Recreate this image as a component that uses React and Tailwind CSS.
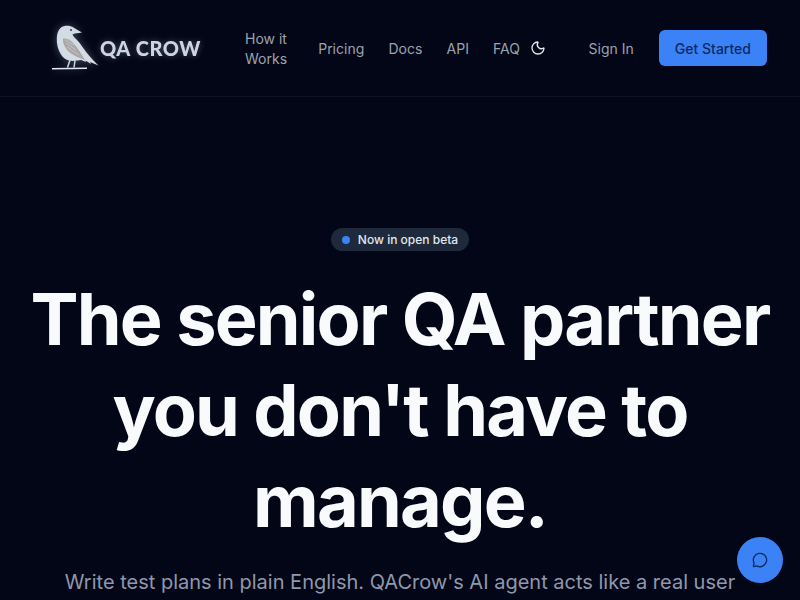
import { Moon, MessageCircle } from "lucide-react"

const navLinks = ["How it Works", "Pricing", "Docs", "API", "FAQ"]

// viewBox keeps the page coordinates of the logo, easier to line up with the picture
function CrowLogo() {
  return (
    <svg
      width="48"
      height="46"
      viewBox="52 24 48 46"
      className="shrink-0 drop-shadow-[0_0_4px_rgba(186,210,240,0.35)]"
    >
      <path
        d="M82 32.5 C79 30.5 76 29.5 73.5 27.5 C70 25 64 25 61 27.5 C58 30 57 34 56.8 38 C56.5 44 58 50 61 54.5 C63 57.5 66 60 69 60.5 C73 61.5 78 60.5 81 60 L86 62 L85.5 60.5 L91 64 L90 62 L98.5 65.5 L93 60 C88 55 84 49 80 43.5 C77 39.5 73.5 37 72.5 34.5 C74 33 78 33.5 82 32.5 Z"
        fill="#d3dbe4"
      />
      <path
        d="M63 38.5 C68 38 72 41 75 45 C79 50 82 55 85 60 C79 58 72 55 68 51 C64.5 47 62.5 42 63 38.5 Z"
        fill="#a9a8a6"
      />
      <path
        d="M66 43 L76 50 M67 47 L79 55 M65 40 L74 45"
        stroke="#c9ccd0"
        strokeWidth="0.8"
        fill="none"
      />
      <path d="M70 60 L67.5 67.5 M75 60.5 L74 67.5" stroke="#cbd5e1" strokeWidth="1.5" fill="none" />
      <path d="M52 68.8 L87 68.2" stroke="#e2e8f0" strokeWidth="1.4" fill="none" />
      <circle cx="71" cy="30" r="0.9" fill="#1e293b" />
    </svg>
  )
}

export default function App() {
  return (
    <div className="h-[600px] overflow-hidden bg-[#030616] font-['Inter',sans-serif] text-white relative">
      <nav className="h-[97px] border-b border-[#0e1222] flex items-center pl-[52px] pr-[33px]">
        <div className="flex items-center w-[148px] shrink-0 mt-[-2px]">
          <CrowLogo />
          <span className="font-['Lato',sans-serif] font-black text-[20px] tracking-[0.03em] text-[#cdd6e0] whitespace-nowrap mt-[2px] drop-shadow-[0_0_3px_rgba(186,210,240,0.35)]">
            QA CROW
          </span>
        </div>

        <div className="flex items-center gap-[24.2px] ml-[45px] mt-0.5 text-sm text-[#9ca3af]">
          {navLinks.map((l) => (
            <a key={l} className={l === "How it Works" ? "w-[49px] leading-5" : "leading-5"}>
              {l}
            </a>
          ))}
        </div>
        <Moon className="ml-[10px] text-[#e5e7eb]" size={16} />

        <div className="ml-auto flex items-center gap-[25px]">
          <a className="text-sm text-[#9ca3af] mt-0.5">Sign In</a>
          <button className="h-9 px-4 pt-px rounded-md bg-[#3b82f6] text-[#0c2a66] text-sm font-medium">
            Get Started
          </button>
        </div>
      </nav>

      <section className="flex flex-col items-center text-center pt-[131px]">
        <div className="flex items-center gap-2 h-[23px] px-[11px] rounded-full bg-[#1e293b] text-xs font-medium text-[#e2e8f0]">
          <span className="w-2 h-2 rounded-full bg-[#3b82f6]" />
          Now in open beta
        </div>
        <h1 className="mt-[22px] w-[760px] text-[72px] leading-[91px] font-bold tracking-[-0.025em] text-[#f8fafc]">
          The senior QA partner you don't have to manage.
        </h1>
        <p className="mt-[22px] text-xl text-[#8f98ac] whitespace-nowrap">
          Write test plans in plain English. QACrow's AI agent acts like a real user
        </p>
      </section>

      <button className="absolute right-[17px] bottom-[17px] w-[46px] h-[46px] rounded-full bg-[#3b82f6] flex items-center justify-center text-[#0c2a66]">
        <MessageCircle size={16} />
      </button>
    </div>
  )
}
